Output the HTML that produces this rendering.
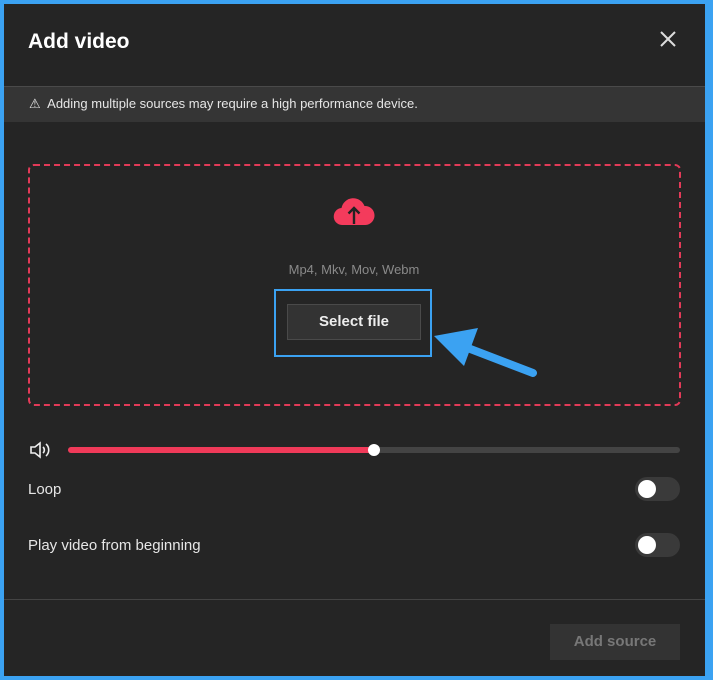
<html><head><style>
body{margin:0;width:713px;height:680px;background:#3ba2f2;position:relative;overflow:hidden;font-family:"Liberation Sans",sans-serif}
.d{position:absolute;left:4px;top:4px;width:701px;height:672px;background:#252525}
.a{position:absolute}
</style></head><body><div class="d"></div>
<div class="a" style="left:28px;top:30px;color:#fff;font-size:21px;font-weight:bold">Add video</div>
<svg class="a" style="left:659px;top:30px" width="18" height="18"><path d="M2 2L16 16M16 2L2 16" stroke="#ddd" stroke-width="2"/></svg>
<div class="a" style="left:4px;top:86px;width:701px;height:35px;background:#353535;border-top:1px solid #4a4a4a"></div>
<div class="a" style="left:29px;top:96px;color:#e6e6e6;font-size:13px">⚠&nbsp; Adding multiple sources may require a high performance device.</div>
<div class="a" style="left:28px;top:164px;width:649px;height:238px;border:2px dashed #e33a58;border-radius:6px"></div>
<svg class="a" style="left:333px;top:195px" width="42" height="32"><path d="M10 30a8.5 8.5 0 0 1-1.5-17a12 12 0 0 1 23-2a9.5 9.5 0 0 1 1 19z" fill="#f43b5c"/><path d="M21 29V13M15.5 18.5L21 13l5.5 5.5" stroke="#222" stroke-width="2.4" fill="none"/></svg>
<div class="a" style="left:0;width:708px;top:262px;text-align:center;color:#8a8a8a;font-size:13px">Mp4, Mkv, Mov, Webm</div>
<div class="a" style="left:274px;top:289px;width:154px;height:64px;border:2px solid #3ba2f2"></div>
<div class="a" style="left:287px;top:304px;width:132px;height:34px;background:#333;border:1px solid #4a4a4a;color:#eee;font-weight:bold;font-size:15px;text-align:center;line-height:34px">Select file</div>
<svg class="a" style="left:430px;top:320px" width="115" height="65"><path d="M103 53L30 25" stroke="#3ba2f2" stroke-width="8" stroke-linecap="round"/><path d="M4 16L48 8L34 46z" fill="#3ba2f2"/></svg>
<svg class="a" style="left:29px;top:441px" width="22" height="18"><path d="M2 6h4l5-4v14l-5-4H2z" fill="none" stroke="#eee" stroke-width="1.6"/><path d="M14 6a4 4 0 0 1 0 6M17 3a8 8 0 0 1 0 12" fill="none" stroke="#eee" stroke-width="1.6"/></svg>
<div class="a" style="left:68px;top:447px;width:612px;height:6px;background:#444;border-radius:3px"></div>
<div class="a" style="left:68px;top:447px;width:306px;height:6px;background:#f03a59;border-radius:3px"></div>
<div class="a" style="left:368px;top:444px;width:12px;height:12px;background:#fff;border-radius:50%"></div>
<div class="a" style="left:28px;top:481px;color:#e6e6e6;font-size:15px">Loop</div>
<div class="a" style="left:28px;top:537px;color:#e6e6e6;font-size:15px">Play video from beginning</div>
<div class="a" style="left:635px;top:477px;width:45px;height:24px;background:#3a3a3a;border-radius:12px"><div style="margin:3px;width:18px;height:18px;background:#fff;border-radius:50%"></div></div>
<div class="a" style="left:635px;top:533px;width:45px;height:24px;background:#3a3a3a;border-radius:12px"><div style="margin:3px;width:18px;height:18px;background:#fff;border-radius:50%"></div></div>
<div class="a" style="left:4px;top:599px;width:701px;height:1px;background:#444"></div>
<div class="a" style="left:550px;top:624px;width:130px;height:36px;background:#333;color:#777;font-weight:bold;font-size:15px;text-align:center;line-height:36px">Add source</div>
</body></html>
